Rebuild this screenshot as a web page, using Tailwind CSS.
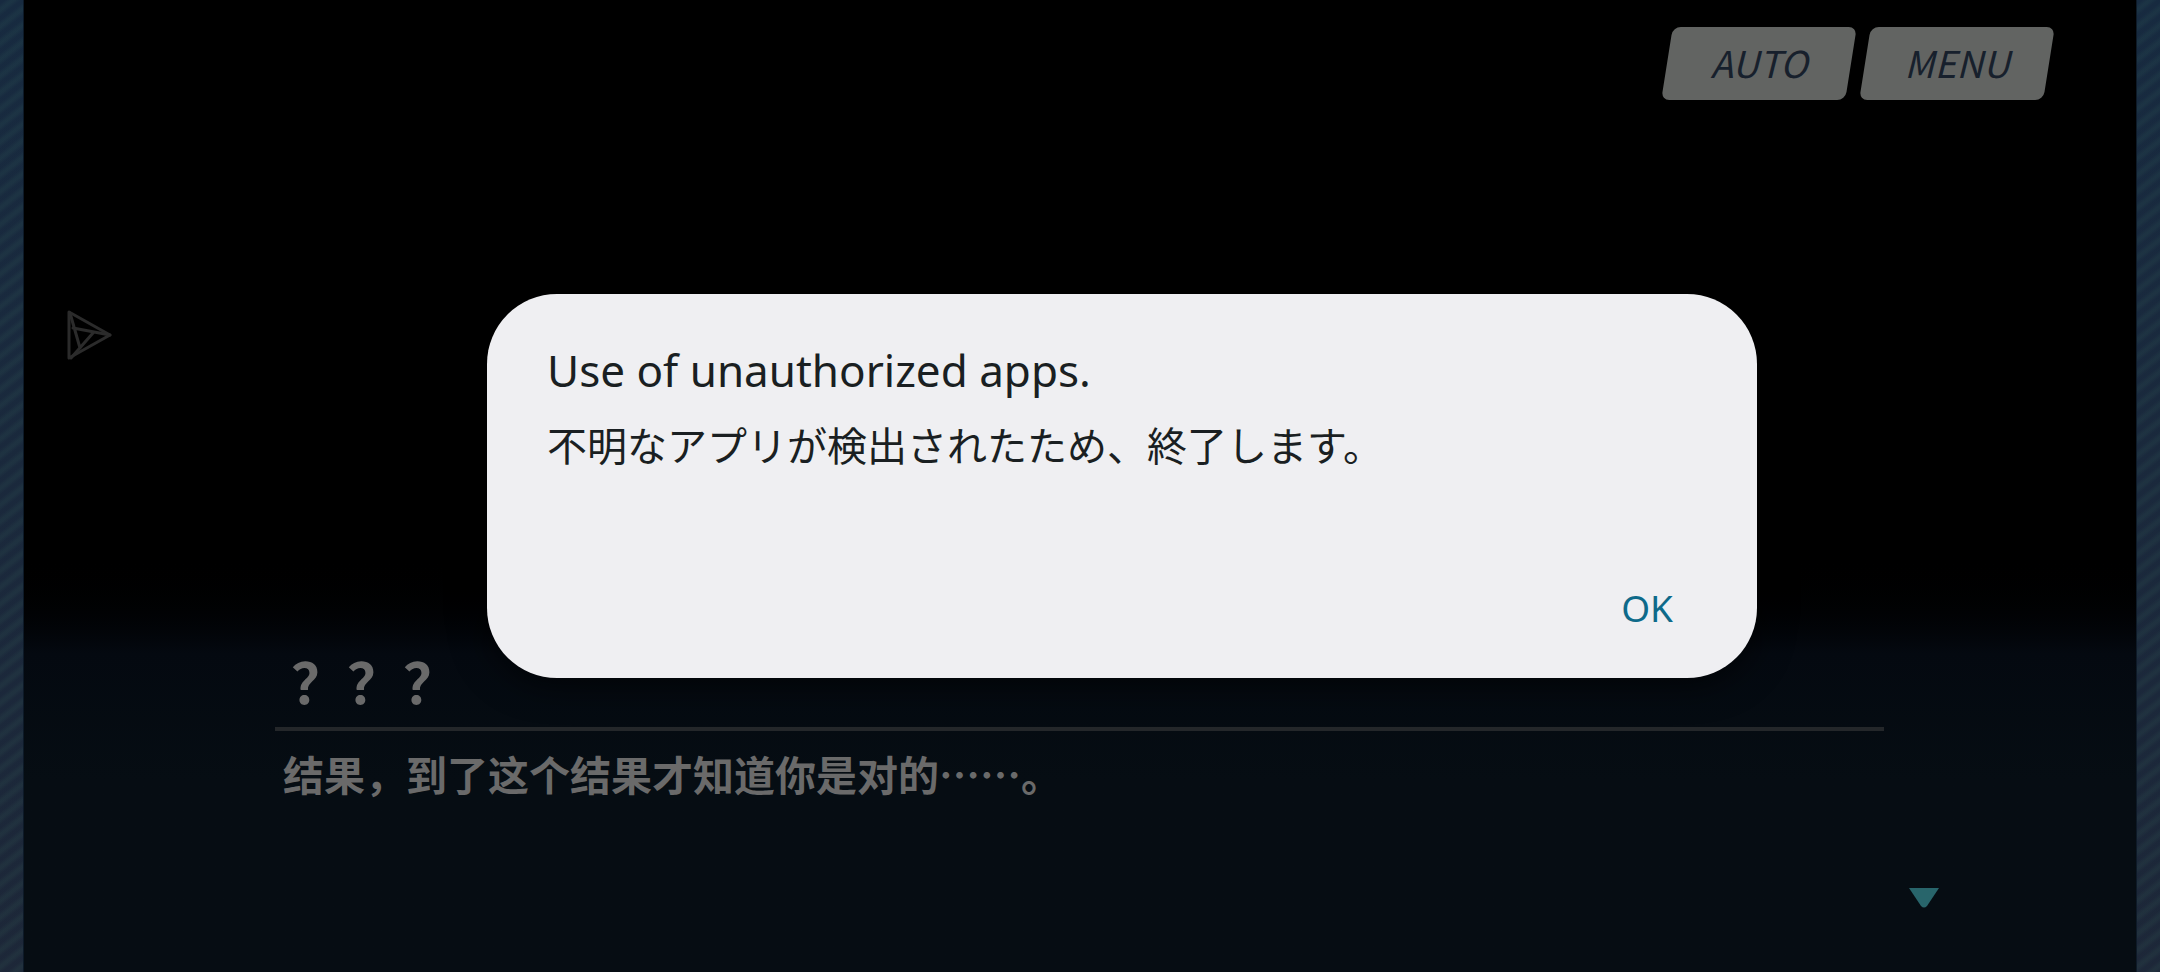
<!DOCTYPE html>
<html lang="zh-CN">
  <head>
    <meta charset="UTF-8" />
    <meta name="viewport" content="width=device-width, initial-scale=1.0" />
    <script src="https://cdn.jsdelivr.net/npm/@tailwindcss/browser@4"></script>
    <title>Story</title>
  </head>
  <body class="relative flex min-h-screen bg-black font-['Noto_Sans_CJK_SC',sans-serif]">
    <!-- Left striped border -->
    <div class="w-6 shrink-0 border-r border-[#0d1a28] bg-linear-to-b from-[#182e42] to-[#202a38]">
      <div class="h-full bg-[repeating-linear-gradient(142deg,#14203a40_0px,#14203a40_3px,#24404a4d_7px,#24404a4d_9px,#14203a40_13px)]"></div>
    </div>

    <main class="flex flex-1 flex-col">
      <header class="flex justify-end gap-[14px] pt-[27px] pr-[87px]">
        <button
          type="button"
          class="relative isolate h-[73px] w-[184px] pb-[2px] text-[37px] text-[#17202c] italic before:absolute before:inset-0 before:-z-10 before:-skew-x-[9deg] before:rounded-lg before:bg-[#626462]"
        >
          AUTO
        </button>
        <button
          type="button"
          class="relative isolate h-[73px] w-[184px] pb-[2px] text-[37px] text-[#17202c] italic before:absolute before:inset-0 before:-z-10 before:-skew-x-[9deg] before:rounded-lg before:bg-[#626462]"
        >
          MENU
        </button>
      </header>

      <div class="mt-52 pl-[43px]">
        <svg class="h-[54px] w-[46px]" viewBox="0 0 46 54" fill="none" stroke="#2b2b2b" stroke-width="3" stroke-linejoin="round" stroke-linecap="round">
          <path d="M2 4 L43 27 L2 50 Z" />
          <path d="M3 5 L13 40 M43 27 L6 20 M4 50 L26 25" />
        </svg>
      </div>

      <!-- Dialogue -->
      <section class="mt-auto bg-linear-to-b from-black via-[#040910] via-25% to-[#060d13] to-55% pt-[98px] pb-16">
        <div class="mr-[252px] ml-[251px]">
          <h2 class="border-b-4 border-[#24272a] pb-3 pl-4 text-[56px] leading-[70px] font-bold text-[#6a6a6a]">？？？</h2>
          <p class="pt-[14px] pl-2 text-[41px] leading-[56px] font-bold text-[#6a6a6a]">结果，到了这个结果才知道你是对的……。</p>
        </div>
        <div class="mt-[87px] flex justify-end pr-[196px]">
          <svg class="h-5 w-8" viewBox="0 0 32 20" fill="#28656b">
            <path d="M1 0 H31 L19 18 Q16 21 13 18 Z" />
          </svg>
        </div>
      </section>
    </main>

    <!-- Right striped border -->
    <div class="w-6 shrink-0 border-l border-[#0d1a28] bg-linear-to-b from-[#182e42] to-[#202a38]">
      <div class="h-full bg-[repeating-linear-gradient(142deg,#14203a40_0px,#14203a40_3px,#24404a4d_7px,#24404a4d_9px,#14203a40_13px)]"></div>
    </div>

    <!-- Alert -->
    <div class="absolute inset-0 flex items-center justify-center pl-[84px]">
      <div
        role="alertdialog"
        aria-labelledby="alertTitle"
        aria-describedby="alertText"
        class="flex min-h-96 w-full max-w-[1270px] flex-col rounded-[70px] bg-[#efeff2] px-[60px] pt-11 pb-9 shadow-[0_4px_36px_#000000b3]"
      >
        <h1 id="alertTitle" class="font-['Noto_Sans',sans-serif] text-[44px] leading-[64px] text-[#1a1f22]">Use of unauthorized apps.</h1>
        <p id="alertText" lang="ja" class="mt-3 font-['Noto_Sans_CJK_JP',sans-serif] text-[40px] leading-[60px] text-[#1a1f22]">不明なアプリが検出されたため、終了します。</p>
        <button type="button" class="mt-auto self-end px-6 py-2 font-['Noto_Sans',sans-serif] text-[37px] leading-[52px] text-[#0e6a8a]">OK</button>
      </div>
    </div>
  </body>
</html>
